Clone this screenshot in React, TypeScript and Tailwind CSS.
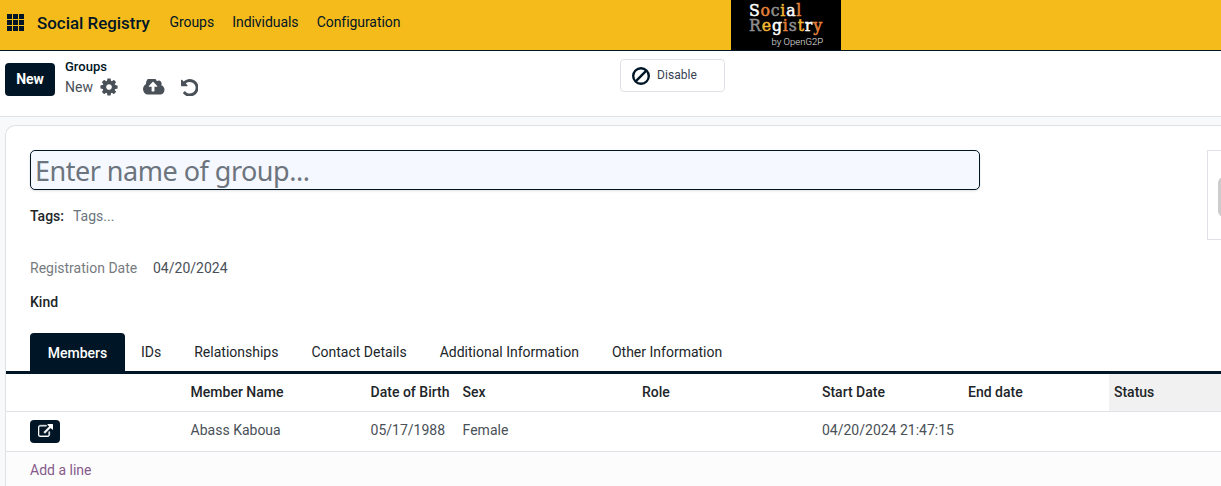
import React from "react";

const CogIcon = () => (
  <svg viewBox="0 0 1792 1792" className="size-5 shrink-0" fill="currentColor">
    <path d="M1152 896q0-106-75-181t-181-75-181 75-75 181 75 181 181 75 181-75 75-181zm512-109v222q0 12-8 23t-20 13l-185 28q-19 54-39 91 35 50 107 138 10 12 10 25t-9 23q-27 37-99 108t-94 71q-12 0-26-9l-138-108q-44 23-91 38-16 136-29 186-7 28-36 28h-222q-14 0-24.5-8.5t-11.5-21.5l-28-184q-49-16-90-37l-141 107q-10 9-25 9-14 0-25-11-126-114-165-168-7-10-7-23 0-12 8-23 15-21 51-66.5t54-70.5q-27-50-41-99l-183-27q-13-2-21-12.5t-8-23.5v-222q0-12 8-23t19-13l186-28q14-46 39-92-40-57-107-138-10-12-10-24 0-10 9-23 26-36 98.5-107.5t94.5-71.5q13 0 26 10l138 107q44-23 91-38 16-136 29-186 7-28 36-28h222q14 0 24.5 8.5t11.5 21.5l28 184q49 16 90 37l142-107q9-9 24-9 13 0 25 10 129 119 165 170 7 8 7 22 0 12-8 23-15 21-51 66.5t-54 70.5q26 50 41 98l183 28q13 2 21 12.5t8 23.5z" />
  </svg>
);

const CloudUploadIcon = () => (
  <svg viewBox="0 256 1920 1280" className="h-[15.5px] w-[21.5px] shrink-0" preserveAspectRatio="none" fill="currentColor">
    <path d="M1280 864q0-14-9-23l-352-352q-9-9-23-9t-23 9l-351 351q-10 12-10 24 0 14 9 23t23 9h224v352q0 13 9.5 22.5t22.5 9.5h192q13 0 22.5-9.5t9.5-22.5v-352h224q13 0 22.5-9.5t9.5-22.5zm640 288q0 159-112.5 271.5t-271.5 112.5h-1088q-185 0-316.5-131.5t-131.5-316.5q0-130 70-240t188-165q-2-30-2-43 0-212 150-362t362-150q156 0 285.5 87t188.5 231q71-62 166-62 106 0 181 75t75 181q0 76-41 138 130 31 213.5 135.5t83.5 238.5z" />
  </svg>
);

const UndoIcon = () => (
  <svg viewBox="128 128 1536 1536" className="mt-px size-[17.5px] shrink-0" fill="currentColor">
    <path d="M1664 896q0 156-61 298t-164 245-245 164-298 61q-172 0-327-72.5t-264-204.5q-7-10-6.5-22.5t8.5-20.5l137-138q10-9 25-9 16 2 23 12 73 95 179 147t225 52q104 0 198.5-40.5t163.5-109.5 109.5-163.5 40.5-198.5-40.5-198.5-109.5-163.5-163.5-109.5-198.5-40.5q-98 0-188 35.5t-160 101.5l137 138q31 30 14 69-17 40-59 40h-448q-26 0-45-19t-19-45v-448q0-42 40-59 39-17 69 14l130 129q107-101 244.5-156.5t284.5-55.5q156 0 298 61t245 164 164 245 61 298z" />
  </svg>
);

const ExternalLinkIcon = () => (
  <svg viewBox="0 0 1792 1536" className="mb-[2px] h-[13px] w-[15px]" fill="currentColor" stroke="currentColor" strokeWidth="50">
    <path d="M1408 928v320q0 119-84.5 203.5t-203.5 84.5h-832q-119 0-203.5-84.5t-84.5-203.5v-832q0-119 84.5-203.5t203.5-84.5h704q14 0 23 9t9 23v64q0 14-9 23t-23 9h-704q-66 0-113 47t-47 113v832q0 66 47 113t113 47h832q66 0 113-47t47-113v-320q0-14 9-23t23-9h64q14 0 23 9t9 23zm384-864v512q0 26-19 45t-45 19-45-19l-176-176-652 652q-10 10-23 10t-23-10l-114-114q-10-10-10-23t10-23l652-652-176-176q-19-19-19-45t19-45 45-19h512q26 0 45 19t19 45z" />
  </svg>
);

const BanIcon = () => (
  <svg viewBox="0 0 18 18" className="-ml-px size-[18px]" fill="none" stroke="currentColor" strokeWidth="2.4">
    <circle cx="9" cy="9" r="7.8" />
    <path d="M3.7 14.3 14.3 3.7" />
  </svg>
);

const AppsIcon = () => (
  <svg viewBox="0 0 17 17" className="size-[17px] shrink-0" fill="currentColor">
    {[0, 6, 12].map((y) => [0, 6, 12].map((x) => <rect key={`${x}-${y}`} x={x} y={y} width="5" height="5" />))}
  </svg>
);

const social = [
  ["S", "text-white"],
  ["o", "text-[#e2803b]"],
  ["c", "text-[#8f8f8f]"],
  ["i", "text-[#f2b632]"],
  ["a", "text-white"],
  ["l", "text-[#e2803b]"],
];
const registry = [
  ["R", "text-[#8f8f8f]"],
  ["e", "text-[#f2b632]"],
  ["g", "text-white"],
  ["i", "text-[#e2803b]"],
  ["s", "text-[#8f8f8f]"],
  ["t", "text-[#f2b632]"],
  ["r", "text-white"],
  ["y", "text-[#e2803b]"],
];

const Logo = () => (
  <div className="h-[50px] w-[110px] shrink-0 bg-black pl-[18px] font-['DejaVu_Serif_Condensed','DejaVu_Serif',serif] text-[17.5px] leading-4 [-webkit-text-stroke:0.5px]">
    <div className="h-4 pt-[2px] whitespace-nowrap tracking-[0.75px]">
      {social.map(([letter, color], i) => (
        <span key={i} className={color}>{letter}</span>
      ))}
    </div>
    <div className="h-4 pt-px whitespace-nowrap tracking-[0.85px]">
      {registry.map(([letter, color], i) => (
        <span key={i} className={color}>{letter}</span>
      ))}
    </div>
    <div className="mt-[4px] pl-[22.5px] font-[Roboto,sans-serif] text-[9.5px] font-light leading-3 whitespace-nowrap text-[#e8e8e8] [-webkit-text-stroke:0px]">
      by OpenG2P
    </div>
  </div>
);

const columns = ["", "Member Name", "Date of Birth", "Sex", "Role", "Start Date", "End date", "Status"];
const member = ["", "Abass Kaboua", "05/17/1988", "Female", "", "04/20/2024 21:47:15", "", ""];
const tabs = ["IDs", "Relationships", "Contact Details", "Additional Information", "Other Information"];
const rowGrid = "grid grid-cols-[179.6px_180px_92px_179.4px_180px_146px_146px_1fr] items-center border-b border-[#dee2e6]";

export default function App() {
  return (
    <div className="flex h-[486px] w-full flex-col overflow-hidden bg-[#f8f9fa] font-[Roboto,sans-serif] text-sm leading-5 text-[#212529]">
      <header className="flex h-[51px] shrink-0 border-b border-[#001626] bg-[#f5bb1b] text-[#001626]">
        <div className="flex w-[731px] items-center pb-[6px] pl-[7px]">
          <AppsIcon />
          <span className="mt-px ml-[13px] w-[132.5px] shrink-0 text-[16.9px] font-medium leading-6">Social Registry</span>
          <nav className="flex gap-[18.2px] text-[14px] tracking-[-0.06px]">
            <span>Groups</span>
            <span>Individuals</span>
            <span>Configuration</span>
          </nav>
        </div>
        <Logo />
      </header>

      <section className="flex h-[66px] shrink-0 border-b border-[#dee2e6] bg-white pl-[5px]">
        <button className="mt-3 h-[33px] w-[50px] rounded-[4px] bg-[#001626] pb-[2px] text-sm font-bold text-white">New</button>
        <div className="ml-[10px] w-[555px] pt-[6px]">
          <div className="text-[13px] font-medium leading-5 text-[#001626]">Groups</div>
          <div className="flex h-5 items-center text-[#495057]">
            <span className="w-[34px]">New</span>
            <CogIcon />
            <span className="ml-6 flex items-center gap-4">
              <CloudUploadIcon />
              <UndoIcon />
            </span>
          </div>
        </div>
        <button className="mt-2 flex h-[33px] w-[105px] items-center rounded-[4px] border border-[#dee2e6] pl-3 text-[#001626]">
          <BanIcon />
          <span className="ml-[7px] pb-[2px] text-[12px] leading-4 tracking-[0.05px] text-[#374151]">Disable</span>
        </button>
      </section>

      <main className="mt-2 ml-[5px] flex grow flex-col rounded-tl-[10px] border-t border-l border-[#dee2e6] bg-white">
        <div className="flex h-[207px] shrink-0 justify-between pt-6 pl-6">
          <div className="w-[950px]">
            <div className="flex h-10 items-center rounded-[5px] border border-[#001626] bg-[#f5f8ff] px-[4px] pt-[2px] font-['Noto_Sans',sans-serif] text-[27px] tracking-[-0.5px] text-[#6c757d] shadow-sm">
              Enter name of group...
            </div>
            <div className="mt-4 flex gap-[9px]">
              <span className="font-medium">Tags:</span>
              <span className="text-[#6c757d]">Tags...</span>
            </div>
            <div className="mt-8 flex">
              <span className="w-[123px] text-[#777b7f]">Registration Date</span>
              <span className="text-[#495057]">04/20/2024</span>
            </div>
            <div className="mt-[14px] font-medium">Kind</div>
          </div>
          <div className="flex h-[90px] w-[14px] items-center overflow-hidden border border-r-0 border-[#dee2e6] pt-1 pl-[10px]">
            <div className="h-[40px] w-[70px] shrink-0 rounded-[6px] bg-[#cccccc]" />
          </div>
        </div>

        <nav className="flex h-[41px] shrink-0 items-stretch border-b-[3px] border-[#001626] pl-6">
          <div className="flex w-[95px] items-center justify-center rounded-t-[4px] bg-[#001626] pt-[2px] font-medium text-white">Members</div>
          <div className="ml-[16px] flex items-center gap-[33px]">
            {tabs.map((tab) => (
              <span key={tab}>{tab}</span>
            ))}
          </div>
        </nav>

        <div className={`${rowGrid} h-[38px] shrink-0 font-medium`}>
          {columns.map((name, i) => (
            <div key={i} className={`flex h-full items-center pb-[2px] pl-[5px] ${name === "Status" ? "bg-[#f1f1f1]" : ""}`}>
              {name}
            </div>
          ))}
        </div>
        <div className={`${rowGrid} h-[40px] shrink-0 text-[#495057]`}>
          {member.map((value, i) => (
            <div key={i} className={i === 0 ? "pl-6" : "pb-[3px] pl-[5px]"}>
              {i === 0 ? (
                <button className="flex h-[23px] w-[30px] items-center justify-center rounded-[4px] bg-[#001626] text-white">
                  <ExternalLinkIcon />
                </button>
              ) : (
                value
              )}
            </div>
          ))}
        </div>
        <div className="grow bg-[#fcfcfc] pt-2 pl-6 text-[#875a8b]">Add a line</div>
      </main>
    </div>
  );
}
